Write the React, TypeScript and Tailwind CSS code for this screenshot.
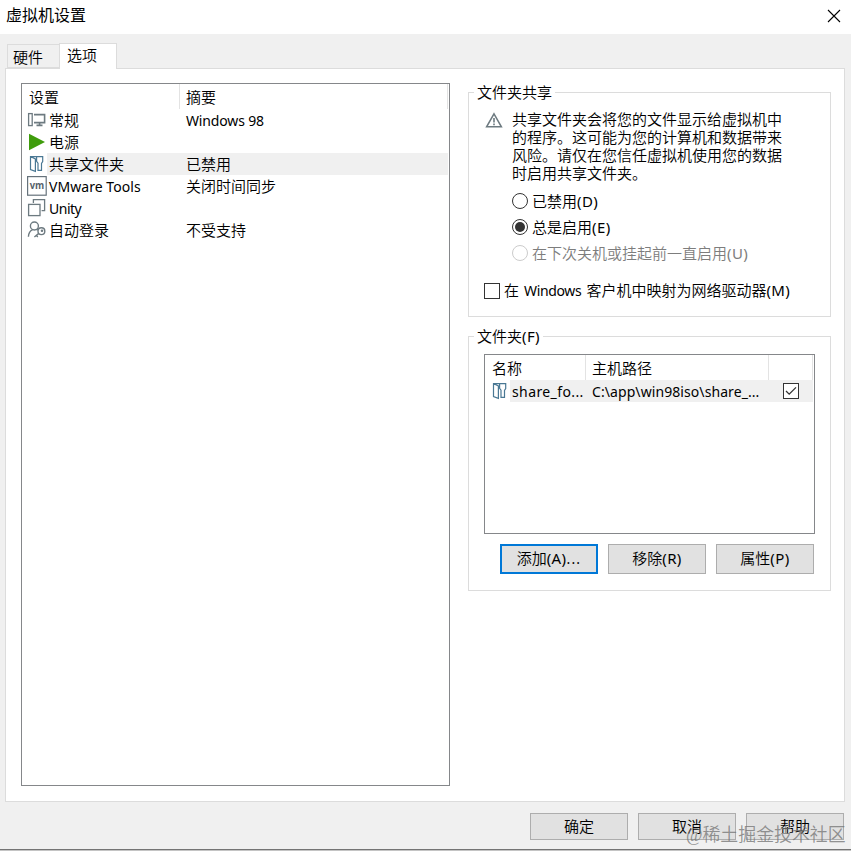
import type { ReactNode } from 'react'
import clsx from 'clsx'

// Latin runs are set in a slightly smaller face than the 15px Chinese text
function En({ children, className }: { children: ReactNode; className?: string }) {
  return (
    <span className={clsx('whitespace-pre text-[14px] font-normal', className)}>
      {children}
    </span>
  )
}

// Access key after a label, e.g. (D)
function Key({ children }: { children: ReactNode }) {
  return <span className="text-[15px] font-normal tracking-[0.4px]">{children}</span>
}

function ComputerIcon() {
  return (
    <svg width="20" height="20" viewBox="0 0 20 20" fill="none" stroke="#6d7a80" strokeWidth="1.3">
      <rect x="1.6" y="3.6" width="3.6" height="12" />
      <path d="M7 4.6h10.6v8H7M12.6 12.6v3M9.5 15.4h6" strokeWidth="1.6" />
    </svg>
  )
}

function PowerIcon() {
  return (
    <svg width="20" height="20" viewBox="0 0 20 20">
      <path d="M2 1.8 18 10 2 18.2z" fill="#3f9c0c" />
    </svg>
  )
}

function FolderIcon() {
  return (
    <svg width="20" height="20" viewBox="0 0 20 20" fill="none" stroke="#4a7894" strokeWidth="1.2">
      <path d="M8.2 2.6H3.5v13l4.9 1.8V5L3.7 2.8M8.2 2.6h7.5v5l-1.2 1.8v7H11V9.2L9.6 7.4V2.8" />
    </svg>
  )
}

function ToolsIcon() {
  return (
    <svg width="20" height="20" viewBox="0 0 20 20">
      <rect x=".6" y=".6" width="18.6" height="18.6" fill="none" stroke="#66727b" strokeWidth="1.2" />
      <text
        x="9.9"
        y="12.8"
        textAnchor="middle"
        textLength="14.5"
        lengthAdjust="spacingAndGlyphs"
        fill="#56626b"
        className="font-['Open_Sans',sans-serif] text-[10.5px] font-bold"
      >
        vm
      </text>
    </svg>
  )
}

function UnityIcon() {
  return (
    <svg width="20" height="20" viewBox="0 0 20 20" fill="none" stroke="#6d7a80" strokeWidth="1.3">
      <rect x="1.6" y="6.4" width="11.4" height="11.2" />
      <path d="M6.4 5V1.6h11.2v11h-3" />
    </svg>
  )
}

function LoginIcon() {
  return (
    <svg width="20" height="20" viewBox="0 0 20 20" fill="none" stroke="#6d7a80" strokeWidth="1.4">
      <circle cx="7.4" cy="6" r="4" />
      <path d="M1.4 16.8c.2-3.6 1.6-6 4.1-6.9M9.6 9.4l1.2.8" />
      <circle cx="14.4" cy="11.2" r="3.4" />
      <path d="M11.8 13.4 7.4 17M9.4 15.4l1.4 1.6" />
      <circle cx="15" cy="10.8" r=".6" />
    </svg>
  )
}

function WarningIcon() {
  return (
    <svg width="18" height="17" viewBox="0 0 18 17" fill="none" stroke="#6d7a80">
      <path d="M9 1.8 16.4 14.8H1.6z" strokeWidth="1.5" />
      <path d="M9 6v4.6M9 11.6v1.6" strokeWidth="1.6" />
    </svg>
  )
}

const settings = [
  { icon: <ComputerIcon />, name: '常规', summary: <En className="tracking-[-0.15px]">Windows 98</En> },
  { icon: <PowerIcon />, name: '电源' },
  { icon: <FolderIcon />, name: '共享文件夹', summary: '已禁用', selected: true },
  { icon: <ToolsIcon />, name: <En className="tracking-[0.05px]">VMware Tools</En>, summary: '关闭时间同步' },
  { icon: <UnityIcon />, name: <En className="tracking-[-0.5px]">Unity</En> },
  { icon: <LoginIcon />, name: '自动登录', summary: '不受支持' },
]

function SettingsList() {
  return (
    <div className="h-[703px] w-[429px] border border-[#85878a] bg-white pr-px">
      <div className="flex h-[25px] items-center">
        <div className="h-full w-[158px] border-r border-[#e3e3e3] pl-[7px] leading-[26px]">设置</div>
        <div className="h-full flex-1 border-r border-[#e3e3e3] pl-[6px] leading-[26px]">摘要</div>
      </div>
      {settings.map((row, i) => (
        <div key={i} className="flex h-[22px] items-center pl-[5px]">
          <div className="w-5 shrink-0">{row.icon}</div>
          <div className={clsx('flex h-full flex-1 items-center', row.selected && 'bg-[#f0f0f0]')}>
            <div className="w-[139px] pl-[2px] leading-[22px]">{row.name}</div>
            <div className="leading-[22px]">{row.summary}</div>
          </div>
        </div>
      ))}
    </div>
  )
}

function Group({ title, className, children }: { title: ReactNode; className?: string; children: ReactNode }) {
  return (
    <section className={clsx('relative border border-[#dcdcdc]', className)}>
      <h2 className="absolute -top-[12px] left-[5px] bg-white px-[3px] leading-[22px]">{title}</h2>
      {children}
    </section>
  )
}

function Radio({ label, checked, disabled }: { label: ReactNode; checked?: boolean; disabled?: boolean }) {
  return (
    <div className={clsx('flex h-[26px] items-center gap-1', disabled && 'text-[#7d7d7d]')}>
      <span
        className={clsx(
          'flex size-4 items-center justify-center rounded-full border bg-white',
          disabled ? 'border-[#cccccc]' : 'border-[#333333]',
        )}
      >
        {checked && <span className="size-[10px] rounded-full bg-[#333333]" />}
      </span>
      <span className="pb-px leading-[22px]">{label}</span>
    </div>
  )
}

function Button({ children, className }: { children: ReactNode; className?: string }) {
  return (
    <button
      className={clsx('flex w-[98px] items-center justify-center bg-[#e1e1e1] leading-[22px]', className)}
    >
      <span>{children}</span>
    </button>
  )
}

function SharingGroup() {
  return (
    <Group title="文件夹共享" className="h-[225px]">
      <div className="flex pl-4 pt-[17px]">
        <div className="pt-[2px]">
          <WarningIcon />
        </div>
        <p className="ml-[9px] leading-[18px]">
          共享文件夹会将您的文件显示给虚拟机中
          <br />
          的程序。这可能为您的计算机和数据带来
          <br />
          风险。请仅在您信任虚拟机使用您的数据
          <br />
          时启用共享文件夹。
        </p>
      </div>
      <div className="mt-[6px] pl-[43px]">
        <Radio label={<>已禁用<Key>(D)</Key></>} />
        <Radio label={<>总是启用<Key>(E)</Key></>} checked />
        <Radio label={<>在下次关机或挂起前一直启用<Key>(U)</Key></>} disabled />
      </div>
      <div className="mt-[13px] flex items-center gap-1 pl-[15px] leading-[22px]">
        <span className="size-4 border border-[#333333]" />
        <span className="whitespace-pre">
          在<En className="mx-[5px] tracking-[-0.35px]">Windows</En>客户机中映射为网络驱动器<Key>(M)</Key>
        </span>
      </div>
    </Group>
  )
}

function FoldersGroup() {
  return (
    <Group title={<>文件夹<Key>(F)</Key></>} className="mt-[19px] h-[255px] px-[15px] pt-[17px]">
      <div className="h-[180px] w-[331px] border border-[#85878a] pr-px">
        <div className="flex h-[25px] leading-[27px]">
          <div className="w-[101px] border-r border-[#e3e3e3] pl-[7px]">名称</div>
          <div className="w-[183px] border-r border-[#e3e3e3] pl-[6px]">主机路径</div>
          <div className="flex-1 border-r border-[#e3e3e3]" />
        </div>
        <div className="flex h-[22px] pl-[5px] leading-[22px]">
          <div className="w-5 pt-px">
            <FolderIcon />
          </div>
          <div className="flex flex-1 items-center bg-[#f0f0f0]">
            <En className="w-[82px] pl-[2px] pt-px tracking-[0.4px]">share_fo...</En>
            <En className="w-[191px] pt-px tracking-[0.08px]">C:\app\win98iso\share_...</En>
            <span className="flex size-4 items-center justify-center border border-[#333333] bg-white">
              <svg width="12" height="12" viewBox="0 0 12 12" fill="none" stroke="#333" strokeWidth="1.3">
                <path d="m1 6 3.2 3.2L11 2.4" />
              </svg>
            </span>
          </div>
        </div>
      </div>
      <div className="mt-[10px] flex justify-end gap-[10px] pr-px">
        <Button className="h-[30px] border-2 border-[#0078d7] pb-px">
          添加<Key>(A)</Key>
          <En className="tracking-[1.2px]">...</En>
        </Button>
        <Button className="h-[30px] border border-[#adadad] pb-[2px]">移除<Key>(R)</Key></Button>
        <Button className="h-[30px] border border-[#adadad] pb-[2px]">属性<Key>(P)</Key></Button>
      </div>
    </Group>
  )
}

export default function App() {
  return (
    <div className="relative flex h-[851px] w-[851px] flex-col overflow-hidden bg-[#f0f0f0] font-['Noto_Sans','Noto_Sans_CJK_SC',sans-serif] text-[15px] font-[350] text-black">
      <header className="flex h-[34px] shrink-0 items-center justify-between bg-white pl-[6px] pr-[10px]">
        <h1 className="pb-1 text-[16px] font-normal">虚拟机设置</h1>
        <svg className="mb-[3px]" width="14" height="14" viewBox="0 0 14 14" stroke="#000" strokeWidth="1.1">
          <path d="m1 1 12 12M13 1 1 13" />
        </svg>
      </header>

      <nav className="z-10 -mb-px mt-[9px] flex h-[26px] shrink-0 items-end pl-[7px]">
        <div className="mb-px h-6 w-[52px] border border-r-0 border-[#dcdcdc] pl-[5px] leading-[24px]">硬件</div>
        <div className="h-full w-[58px] border border-b-0 border-[#dcdcdc] bg-white pl-[7px] leading-[23px]">选项</div>
      </nav>

      <main className="ml-[5px] flex h-[734px] w-[840px] shrink-0 border border-[#dcdcdc] bg-white pl-[15px] pt-[14px]">
        <SettingsList />
        <div className="ml-[18px] w-[363px] pt-[9px]">
          <SharingGroup />
          <FoldersGroup />
        </div>
      </main>

      <footer className="mt-[11px] flex justify-end gap-[10px] pr-[7px]">
        <Button className="h-[27px] border border-[#adadad] pb-px">确定</Button>
        <Button className="h-[27px] border border-[#adadad] pb-px">取消</Button>
        <Button className="h-[27px] border border-[#adadad] pb-px">帮助</Button>
      </footer>

      <div className="absolute bottom-0 left-0 h-[2px] w-full border-t border-[#747474] bg-[#c4c4c4]" />
      <div className="absolute left-[686px] top-[823px] whitespace-nowrap font-['Liberation_Serif','Noto_Sans_CJK_SC',sans-serif] text-[17.9px] leading-[24px] text-[#777777]/80">
        @稀土掘金技术社区
      </div>
    </div>
  )
}
